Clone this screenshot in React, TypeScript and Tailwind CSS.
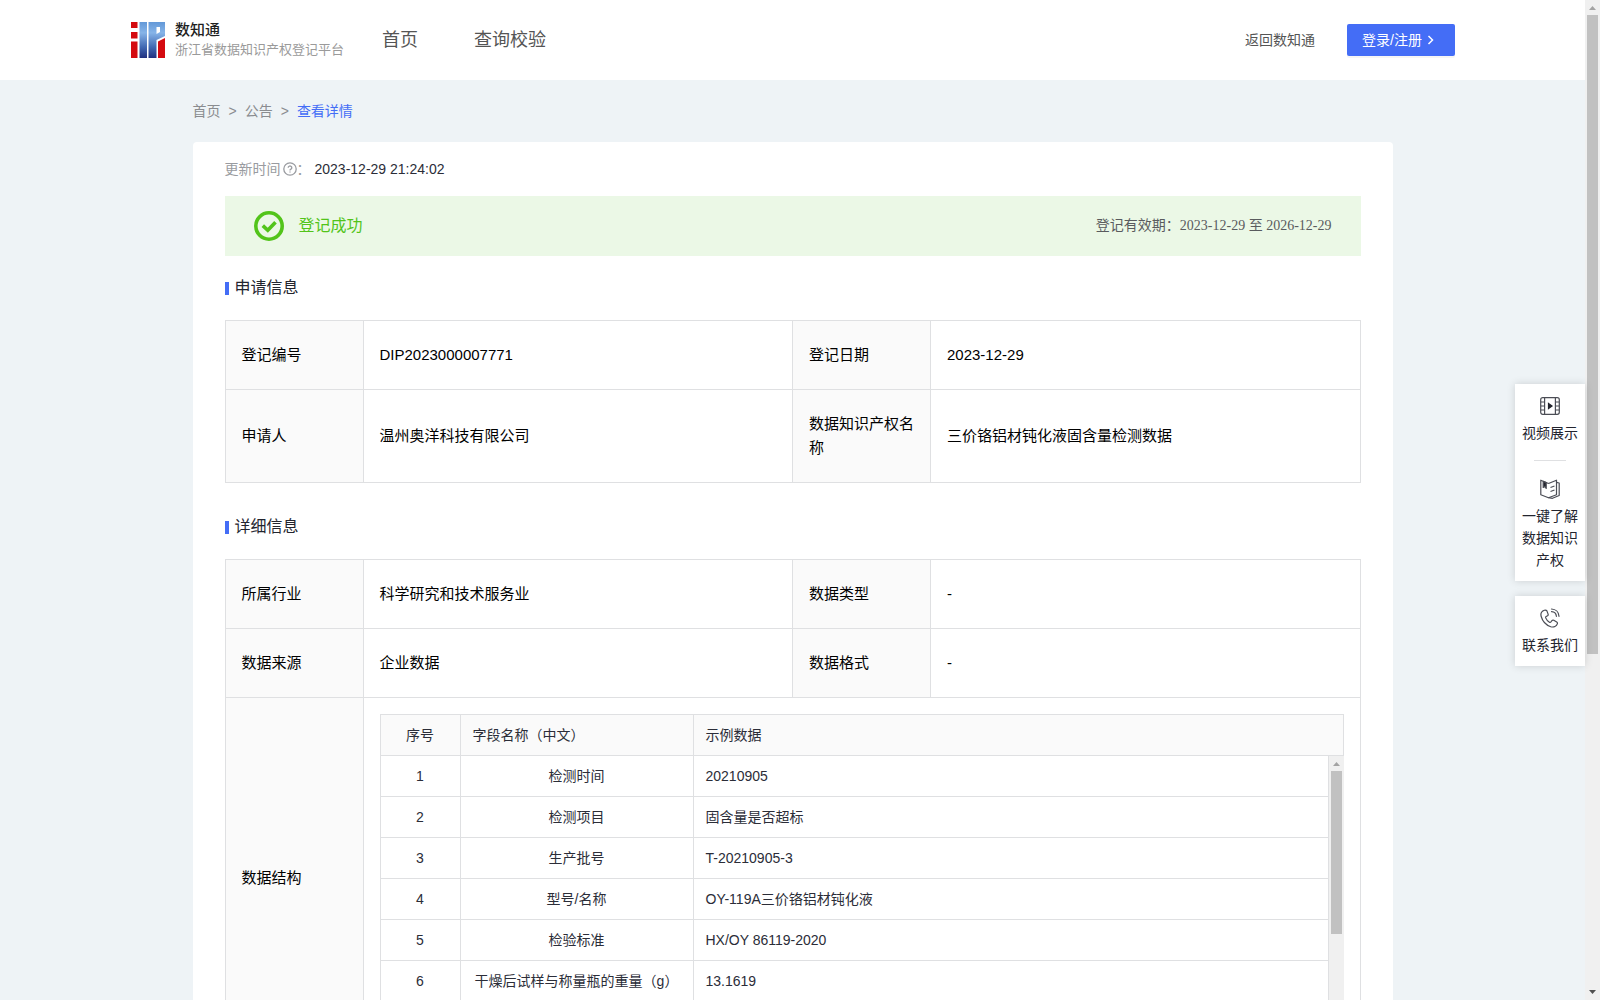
import type { ReactNode } from "react";

const fields = [
  ["检测时间", "20210905"],
  ["检测项目", "固含量是否超标"],
  ["生产批号", "T-20210905-3"],
  ["型号/名称", "OY-119A三价铬铝材钝化液"],
  ["检验标准", "HX/OY 86119-2020"],
  ["干燥后试样与称量瓶的重量（g）", "13.1619"],
];

function Logo() {
  return (
    <svg width="34" height="36" viewBox="0 0 34 36">
      <defs>
        <linearGradient id="logo-blue" x1="0" y1="0" x2="0" y2="36" gradientUnits="userSpaceOnUse">
          <stop offset="0" stopColor="#6298d8" />
          <stop offset="0.3" stopColor="#86b4e8" />
          <stop offset="0.7" stopColor="#4168b2" />
          <stop offset="1" stopColor="#21307f" />
        </linearGradient>
      </defs>
      <g fill="#d40a10">
        <path d="M0 0h6.500v6H0zM0 10h6.500v6.500H0zM0 19.500h6.500V36H0z" />
        <path d="M27 19.500l7-3.500v20h-7z" />
      </g>
      <path d="M8.500 0h7.500v36H8.500z" fill="url(#logo-blue)" />
      <path d="M17.500 0H34v14l-8.500 4V36h-8zM25.500 5v7l3.500-2V5z" fill="url(#logo-blue)" fillRule="evenodd" />
    </svg>
  );
}

function QuestionIcon() {
  return (
    <svg width="14" height="14" viewBox="0 0 14 14" fill="none" stroke="currentColor" strokeWidth="1.300">
      <circle cx="7" cy="7" r="6.200" />
      <path d="M5.200 5.700a1.800 1.700 0 1 1 2.700 1.500c-.6.3-.9.6-.9 1.200" />
      <path d="M7 9.400v1.200" />
    </svg>
  );
}

function SuccessIcon() {
  return (
    <svg width="30" height="30" viewBox="0 0 30 30" fill="none" stroke="#52c41a">
      <circle cx="15" cy="15" r="13.200" strokeWidth="3.600" />
      <path d="M8.800 14.600l5 4.700 7.700-8" strokeWidth="3.600" />
    </svg>
  );
}

function FilmIcon() {
  return (
    <svg width="20" height="20" viewBox="0 0 20 20" fill="none" stroke="#4b4d55" strokeWidth="1.200">
      <rect x="0.700" y="1.700" width="18.600" height="16.600" rx="2" />
      <path d="M4.600 2v16M15.400 2v16M1 6h3.600M1 10h3.600M1 14h3.600M15.400 6H19M15.400 10H19M15.400 14H19" />
      <path d="M8.500 7.500l3.500 2.500-3.500 2.500z" fill="#22242c" stroke="#22242c" />
    </svg>
  );
}

function BookIcon() {
  return (
    <svg width="20" height="20" viewBox="0 0 20 20" fill="none" stroke="#4b4d55" strokeWidth="1.200" strokeLinejoin="round">
      <path d="M8.500 4.500L.8 1.200v14.500l7.700 3 8-3V1.200L8.500 4.500" />
      <path d="M16.500 3.400l2.700.6v12.500L12.500 19.300l-4-.6" />
      <path d="M10.500 8.500l4-1.500M10.500 12.500l4-1.500" />
      <path d="M3.200 2.400v6l1.500-1 1.500 2V3.600z" fill="#22242c" />
    </svg>
  );
}

function PhoneIcon() {
  return (
    <svg width="20" height="20" viewBox="0 0 20 20" fill="none" stroke="#4b4d55" strokeWidth="1.200" strokeLinejoin="round" strokeLinecap="round">
      <path d="M4.300 2.200C1.500 3.200.4 5.600 1.200 8.500c1.400 5 5 8.700 9.600 10.200 3 .9 5.800-.3 6.600-3 .2-.7-.1-1.300-.7-1.700l-2.900-1.700c-.7-.4-1.400-.2-1.900.4l-1 1.300c-.4.500-.9.600-1.500.2-1.800-1.100-3-2.500-3.700-4.300-.2-.6 0-1 .5-1.300l1.300-.8c.6-.4.8-1 .6-1.700l-1.200-3.200c-.4-.7-1.600-1-2.600-.7z" />
      <path d="M11.500 1c4.300.2 7.300 3.200 7.500 7.300M11.500 3.600c2.800.1 4.700 2 4.900 4.700" />
    </svg>
  );
}

function ScrollArrow({ down = false }: { down?: boolean }) {
  return (
    <svg width="15" height="15" viewBox="0 0 15 15" className="block shrink-0">
      {down ? <path d="M4 5h7L7.500 9z" fill="#505050" /> : <path d="M4 10h7L7.500 6z" fill="#a3a3a3" />}
    </svg>
  );
}

function SectionTitle({ children }: { children: ReactNode }) {
  return (
    <h2 className="mb-5 flex h-6 items-center gap-[6px] text-[16px] leading-6 text-[#23252f]">
      <span className="h-[13px] w-1 bg-[#446df6]" />
      {children}
    </h2>
  );
}

function Label({ children }: { children: ReactNode }) {
  return (
    <th scope="row" className="border border-[#dfe0e2] bg-[#fafafa] px-4 py-[22px] text-left font-normal">
      {children}
    </th>
  );
}

function Value({ children }: { children: ReactNode }) {
  return <td className="border border-[#dfe0e2] px-4 py-[22px]">{children}</td>;
}

function InfoTable({ children }: { children: ReactNode }) {
  return (
    <table className="w-full table-fixed border-collapse text-[15px] leading-6 text-black">
      <colgroup>
        <col className="w-[138px]" />
        <col />
        <col className="w-[138px]" />
        <col />
      </colgroup>
      <tbody>{children}</tbody>
    </table>
  );
}

function FieldCols() {
  return (
    <colgroup>
      <col className="w-20" />
      <col className="w-[233px]" />
      <col />
    </colgroup>
  );
}

function FieldTable() {
  const cell = "h-[41px] border-b border-r border-[#dfe0e2] px-3";
  return (
    <div className="border-t border-l border-[#dfe0e2] text-[14px] leading-[22px] text-[#2b2d38]">
      <table className="w-full table-fixed border-separate border-spacing-0 bg-[#fafafa]">
        <FieldCols />
        <thead>
          <tr>
            <th className={`${cell} text-center font-normal`}>序号</th>
            <th className={`${cell} text-left font-normal`}>字段名称（中文）</th>
            <th className={`${cell} text-left font-normal`}>示例数据</th>
          </tr>
        </thead>
      </table>
      <div className="flex h-[286px] overflow-hidden">
        <table className="min-w-0 flex-1 table-fixed border-separate border-spacing-0 self-start">
          <FieldCols />
          <tbody>
            {fields.map(([name, sample], i) => (
              <tr key={name}>
                <td className={`${cell} text-center`}>{i + 1}</td>
                <td className={`${cell} text-center`}>{name}</td>
                <td className={cell}>{sample}</td>
              </tr>
            ))}
          </tbody>
        </table>
        <div className="flex w-[15px] shrink-0 flex-col items-center bg-[#f0f0f0]">
          <ScrollArrow />
          <div className="h-[163px] w-[11px] bg-[#c1c1c1]" />
        </div>
      </div>
    </div>
  );
}

function SideLink({ icon, children }: { icon: ReactNode; children: ReactNode }) {
  return (
    <a href="#" className="flex flex-col items-center gap-[6px] px-[7px] text-center text-[14px] leading-[22px] text-[#23252f]">
      {icon}
      {children}
    </a>
  );
}

export default function App() {
  return (
    <div className="flex h-screen overflow-hidden bg-[#eef3f6] font-['Liberation_Sans','Noto_Sans_CJK_SC',sans-serif]">
      <div className="relative min-w-0 flex-1">
        <header className="flex h-20 items-center bg-white pr-[130px] pl-[131px]">
          <a href="#" className="flex items-center gap-[10px]">
            <Logo />
            <span className="flex flex-col">
              <span className="text-[15px] leading-5 font-medium text-[#1f1f1f]">数知通</span>
              <span className="text-[13px] leading-5 text-[#9a9a9a]">浙江省数据知识产权登记平台</span>
            </span>
          </a>
          <nav className="ml-[38px] flex gap-14 text-[18px] leading-7 text-[#555]">
            <a href="#">首页</a>
            <a href="#">查询校验</a>
          </nav>
          <a href="#" className="ml-auto text-[14px] leading-5 text-[#555]">
            返回数知通
          </a>
          <button className="ml-8 flex h-8 w-[108px] items-center gap-[5px] rounded-[2px] bg-[#446df6] pl-[15px] text-[14px] leading-5 text-white shadow-[0_2px_0_rgba(0,0,0,0.04)]">
            登录/注册
            <svg width="8" height="10" viewBox="0 0 8 10" fill="none" stroke="currentColor" strokeWidth="1.500">
              <path d="M1.500 1l4 4-4 4" />
            </svg>
          </button>
        </header>

        <main className="mx-auto w-full max-w-[1200px]">
          <nav className="flex gap-2 py-5 text-[14px] leading-[22px] text-[#8a8c90]">
            <a href="#">首页</a>
            <span>&gt;</span>
            <a href="#">公告</a>
            <span>&gt;</span>
            <a href="#" className="text-[#446df6]">
              查看详情
            </a>
          </nav>

          <div className="rounded bg-white px-8 pt-4 pb-8">
            <div className="flex items-center text-[14px] leading-[22px] text-[#999ba0]">
              更新时间
              <span className="ml-[2px]">
                <QuestionIcon />
              </span>
              ：<span className="ml-1 text-[#2b2d38]">2023-12-29 21:24:02</span>
            </div>

            <div className="mt-4 mb-5 flex h-[60px] items-center bg-[#ebf8e6] px-[29px]">
              <SuccessIcon />
              <span className="ml-[15px] text-[16px] leading-6 text-[#52c41a]">登记成功</span>
              <span className="ml-auto font-['Liberation_Serif','Noto_Sans_CJK_SC',serif] text-[14px] leading-[22px] text-[#595b5e]">
                登记有效期：2023-12-29 至 2026-12-29
              </span>
            </div>

            <SectionTitle>申请信息</SectionTitle>
            <InfoTable>
              <tr>
                <Label>登记编号</Label>
                <Value>DIP2023000007771</Value>
                <Label>登记日期</Label>
                <Value>2023-12-29</Value>
              </tr>
              <tr>
                <Label>申请人</Label>
                <Value>温州奥洋科技有限公司</Value>
                <Label>数据知识产权名称</Label>
                <Value>三价铬铝材钝化液固含量检测数据</Value>
              </tr>
            </InfoTable>

            <div className="h-8" />

            <SectionTitle>详细信息</SectionTitle>
            <InfoTable>
              <tr>
                <Label>所属行业</Label>
                <Value>科学研究和技术服务业</Value>
                <Label>数据类型</Label>
                <Value>-</Value>
              </tr>
              <tr>
                <Label>数据来源</Label>
                <Value>企业数据</Value>
                <Label>数据格式</Label>
                <Value>-</Value>
              </tr>
              <tr>
                <Label>数据结构</Label>
                <td colSpan={3} className="border border-[#dfe0e2] p-4">
                  <FieldTable />
                </td>
              </tr>
            </InfoTable>
          </div>
        </main>

        <aside className="absolute top-[384px] right-0 flex w-[70px] flex-col gap-[15px]">
          <div className="bg-white pt-3 pb-[10px] shadow-[0_0_8px_rgba(0,0,0,0.15)]">
            <SideLink icon={<FilmIcon />}>视频展示</SideLink>
            <hr className="mx-auto mt-4 mb-[18px] w-8 border-[#dfe0e2]" />
            <SideLink icon={<BookIcon />}>一键了解数据知识产权</SideLink>
          </div>
          <div className="bg-white pt-3 pb-[10px] shadow-[0_0_8px_rgba(0,0,0,0.15)]">
            <SideLink icon={<PhoneIcon />}>联系我们</SideLink>
          </div>
        </aside>
      </div>

      {/* page scrollbar */}
      <div className="flex w-[15px] shrink-0 flex-col items-center bg-[#f0f0f0]">
        <ScrollArrow />
        <div className="h-[639px] w-[11px] bg-[#c1c1c1]" />
        <div className="mt-auto">
          <ScrollArrow down />
        </div>
      </div>
    </div>
  );
}
